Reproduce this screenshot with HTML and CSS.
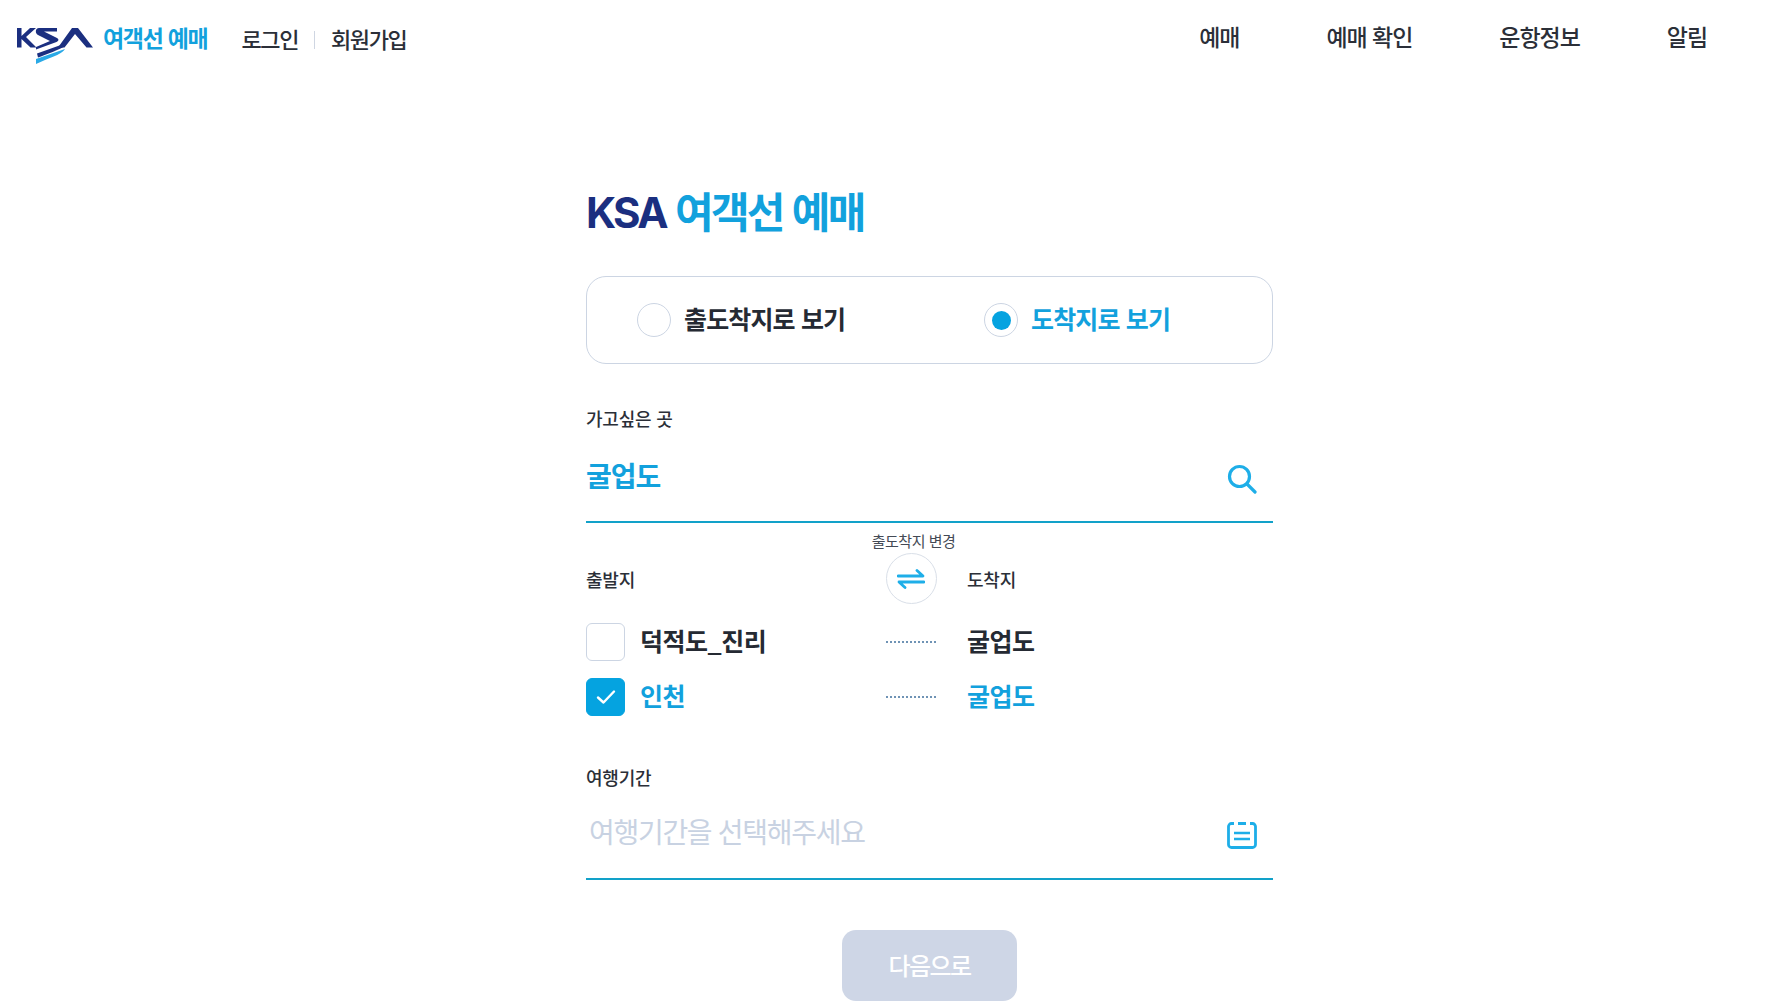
FILE: index.html
```html
<!DOCTYPE html>
<html lang="ko">
<head>
<meta charset="utf-8">
<title>KSA 여객선 예매</title>
<link rel="stylesheet" href="styles.css">
</head>
<body>
<header class="header">
  <div class="brand">
    <svg class="logo" viewBox="0 0 76 40" width="76" height="40" aria-hidden="true">
      <path d="M0 3h4.500v8L13 3h6l-10 9 10.500 10.500h-6L4.500 14v8.500H0z" fill="#1b2f80"/>
      <path d="M20 3h20v3.600H27l13 6.400c2 1 2 3-.5 4L19 24.500v-2.500l14-6-12-6c-3-1.500-3-7 1-7z" fill="#1b2f80"/>
      <path d="M55 3h6l15 19.500h-6.500L58 9 47.500 22.500H41z" fill="#1b2f80"/>
      <path d="M20 28.500l28-10v2.500c-4 3-20 9-27 11.500z" fill="#1b2f80"/>
      <path d="M19 34l29-10c-2 4-12 8-20 11l-9 4z" fill="#2aa9e6"/>
    </svg>
    <span class="brand-name">여객선 예매</span>
    <a class="auth">로그인</a>
    <span class="auth-sep"></span>
    <a class="auth">회원가입</a>
  </div>
  <nav class="nav">
    <a>예매</a>
    <a>예매 확인</a>
    <a>운항정보</a>
    <a>알림</a>
  </nav>
</header>

<main class="main">
  <h1 class="title"><span class="title-ksa">KSA</span> 여객선 예매</h1>

  <div class="mode">
    <div class="mode-col">
      <span class="radio"></span>
      <span class="mode-label">출도착지로 보기</span>
    </div>
    <div class="mode-col mode-col-on">
      <span class="radio radio-on"></span>
      <span class="mode-label">도착지로 보기</span>
    </div>
  </div>

  <div class="field-label">가고싶은 곳</div>
  <div class="field">
    <span class="field-value">굴업도</span>
    <svg class="field-icon" viewBox="0 0 30 30" width="30" height="30" aria-hidden="true">
      <circle cx="12.500" cy="12.500" r="10" fill="none" stroke="#1eaee8" stroke-width="3.200"/>
      <path d="M20 20l8 8" fill="none" stroke="#1eaee8" stroke-width="3.200" stroke-linecap="round"/>
    </svg>
  </div>

  <div class="route-head">
    <span class="col-from head-text">출발지</span>
    <div class="col-mid swap-wrap">
      <span class="swap-label">출도착지 변경</span>
      <span class="swap">
        <svg viewBox="0 0 28 20" width="28" height="20" aria-hidden="true">
          <path d="M1 7h25l-6-5.500M27 13H2l6 5.500" fill="none" stroke="#1eaee8" stroke-width="2.800" stroke-linecap="round" stroke-linejoin="round"/>
        </svg>
      </span>
    </div>
    <span class="col-to head-text">도착지</span>
  </div>

  <div class="route-row">
    <div class="col-from from-cell">
      <span class="check"></span>
      <span class="route-name">덕적도_진리</span>
    </div>
    <div class="col-mid"><span class="dots"></span></div>
    <span class="col-to route-name">굴업도</span>
  </div>
  <div class="route-row route-row-on">
    <div class="col-from from-cell">
      <span class="check check-on">
        <svg viewBox="0 0 20 16" width="20" height="16" aria-hidden="true">
          <path d="M2 8.500l5.500 5L18 2.500" fill="none" stroke="#fff" stroke-width="2.400" stroke-linecap="round" stroke-linejoin="round"/>
        </svg>
      </span>
      <span class="route-name">인천</span>
    </div>
    <div class="col-mid"><span class="dots"></span></div>
    <span class="col-to route-name">굴업도</span>
  </div>

  <div class="field-label period-label">여행기간</div>
  <div class="field field-period">
    <span class="field-placeholder">여행기간을 선택해주세요</span>
    <svg class="field-icon" viewBox="0 0 30 28" width="30" height="28" aria-hidden="true">
      <path d="M7 2.500H4.500a3 3 0 0 0-3 3v18a3 3 0 0 0 3 3h21a3 3 0 0 0 3-3v-18a3 3 0 0 0-3-3H23M11 2.500h8" fill="none" stroke="#1eaee8" stroke-width="2.800"/>
      <path d="M7 12h16M7 18h16" stroke="#1eaee8" stroke-width="2.600" fill="none"/>
    </svg>
  </div>

  <div class="actions"><button class="next" type="button">다음으로</button></div>
</main>
</body>
</html>
```

FILE: styles.css
```css
* { box-sizing: border-box; }
html, body { margin: 0; padding: 0; background: #fff; height: 1008px; overflow: hidden; }
body { font-family: "Noto Sans CJK KR", "Noto Sans", sans-serif; color: #252a33; }

.header { display: flex; justify-content: space-between; align-items: center; height: 78px; padding: 0 61px 0 17px; }
.brand { display: flex; align-items: center; }
.logo { display: block; margin-top: 12px; }
.brand-name { margin: -4px 0 0 10px; font-size: 23px; font-weight: 700; letter-spacing: -1.3px; color: #12a1dd; }
.auth { margin-top: -2px; font-size: 22px; font-weight: 500; letter-spacing: -1.4px; color: #2b2f38; }
.brand-name + .auth { margin-left: 34px; }
.auth-sep { width: 1px; height: 18px; background: #cfd6e2; margin: 2px 16px 0; }
.nav { display: flex; gap: 87px; margin-top: -7px; }
.nav a { font-size: 23px; font-weight: 500; letter-spacing: -1.05px; color: #2b2f38; }

.main { width: 687px; margin: 0 0 0 586px; }
.title { margin: 100px 0 0; height: 66px; font-size: 42px; line-height: 64px; font-weight: 700; letter-spacing: -2.7px; color: #12a1dd; }
.title-ksa { color: #1b2f80; font-family: "Inter", sans-serif; }

.mode { display: flex; height: 88px; margin-top: 32px; padding-left: 50px; border: 1px solid #ccd5e3; border-radius: 20px; }
.mode-col { display: flex; align-items: center; gap: 13px; width: 347px; flex: none; }
.radio { display: flex; align-items: center; justify-content: center; width: 34px; height: 34px; border: 1px solid #ccd5e3; border-radius: 50%; }
.radio-on::after { content: ""; width: 19px; height: 19px; border-radius: 50%; background: #05a3e0; }
.mode-label { padding-bottom: 4px; font-size: 25px; font-weight: 700; letter-spacing: -0.85px; color: #252a33; }
.mode-col-on .mode-label { color: #12a1dd; }

.field-label { margin-top: 39px; height: 30px; font-size: 18px; line-height: 30px; font-weight: 500; letter-spacing: -0.2px; color: #2b2f38; }
.field { display: flex; justify-content: space-between; align-items: center; height: 90px; padding: 0 16px 4px 0; border-bottom: 2px solid #12a1c9; }
.field-period { height: 88px; padding-bottom: 8px; }
.field-value { font-size: 28px; font-weight: 700; letter-spacing: -1px; color: #12a1dd; }
.field-placeholder { margin-left: 3px; font-size: 28px; font-weight: 400; letter-spacing: -1.3px; color: #c8d2e2; }
.field-icon { display: block; margin-top: 8px; }

.route-head, .route-row { display: grid; grid-template-columns: 269px 52px 1fr; column-gap: 30px; align-items: center; }
.route-head { height: 71px; margin-top: 20px; }
.head-text { font-size: 18px; font-weight: 500; letter-spacing: -0.2px; color: #2b2f38; }
.col-mid { display: flex; justify-content: center; align-items: center; }
.swap-wrap { position: relative; }
.swap-label { position: absolute; left: 50%; bottom: 100%; margin-bottom: 2px; transform: translateX(-47%); white-space: nowrap; font-size: 15px; line-height: 20px; letter-spacing: -0.5px; color: #444a55; }
.swap { display: flex; align-items: center; justify-content: center; width: 51px; height: 51px; border: 1px solid #d9dfe8; border-radius: 50%; background: #fff; }

.route-row { height: 55px; }
.from-cell { display: flex; align-items: center; gap: 15px; }
.check { display: flex; align-items: center; justify-content: center; width: 39px; height: 38px; border: 1px solid #ccd5e3; border-radius: 6px; background: #fff; }
.check-on { background: #05a3e0; border-color: #05a3e0; }
.route-name { padding-bottom: 3px; font-size: 25px; font-weight: 700; letter-spacing: -0.5px; color: #252a33; }
.route-row-on .route-name { color: #12a1dd; }
.dots { width: 50px; border-top: 2px dotted #6f93b5; }

.period-label { margin-top: 38px; }
.actions { display: flex; justify-content: center; margin-top: 50px; }
.next { width: 175px; height: 71px; padding-bottom: 3px; border: 0; border-radius: 14px; background: #ced6e6; color: #fff; font-family: inherit; font-size: 24px; font-weight: 500; letter-spacing: -1.6px; }
```
